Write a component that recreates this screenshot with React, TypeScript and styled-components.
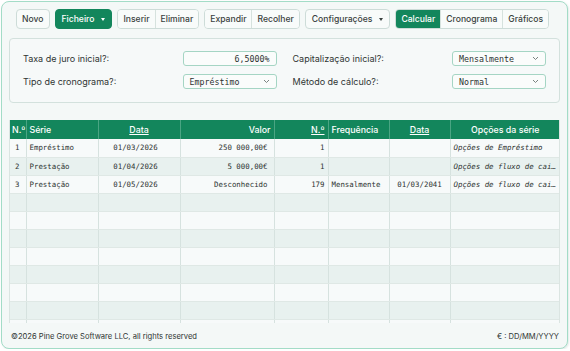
import React from "react";
import styled, { createGlobalStyle, css } from "styled-components";

const GlobalStyle = createGlobalStyle`
  html, body { margin: 0; padding: 0; background: #ffffff; }
  body { font-family: Inter, "Noto Sans", sans-serif; color: #2d3331; }
  * { box-sizing: border-box; }
`;

const GREEN = "#13865c";
const MONO = `"DejaVu Sans Mono", "Liberation Mono", monospace`;

const Card = styled.div`
  margin: 1px 0 0 1px;
  width: 567px;
  height: 348px;
  border: 1.5px solid #a3dcc7;
  border-radius: 8px;
  background: #f4f8f7;
  padding: 7px 7px 0 7px;
  display: flex;
  flex-direction: column;
  box-shadow: 1px 1px 2px rgba(60, 120, 100, 0.15);
`;

const Toolbar = styled.div`
  display: flex;
  gap: 5px;
  padding-left: 7px;
  height: 20px;
  & > * { flex-shrink: 0; }
`;

const btnBase = css<{ $primary?: boolean }>`
  height: 20px;
  padding: 0 5px;
  display: flex;
  align-items: center;
  font-family: Inter, sans-serif;
  font-size: 8.6px;
  font-weight: 500;
  color: ${(p) => (p.$primary ? "#ffffff" : "#3a4240")};
  background: ${(p) => (p.$primary ? GREEN : "#f8fbfa")};
  white-space: nowrap;
`;

const Btn = styled.div<{ $primary?: boolean; $caret?: boolean }>`
  ${btnBase};
  border: 1px solid ${(p) => (p.$primary ? GREEN : "#cddcd8")};
  border-radius: 4px;
  ${(p) =>
    p.$caret &&
    css`
      padding: 0 6px;
      &::after {
        content: "";
        margin-left: 7px;
        border-left: 2.5px solid transparent;
        border-right: 2.5px solid transparent;
        border-top: 3px solid currentColor;
      }
    `}
`;

const Group = styled.div`
  display: flex;
  border: 1px solid #cddcd8;
  border-radius: 4px;
  overflow: hidden;
`;

const GroupBtn = styled.div<{ $primary?: boolean }>`
  ${btnBase};
  height: 18px;
  & + & {
    border-left: 1px solid #d6e2de;
  }
`;

const FormPanel = styled.div`
  margin-top: 9px;
  height: 65px;
  border: 1px solid #d3e1dd;
  border-radius: 4px;
  background: #f6f9f9;
  padding: 12px 13px 0 13px;
  display: grid;
  grid-template-columns: 1fr 1fr;
  column-gap: 16px;
  row-gap: 8px;
  align-content: start;
`;

const Field = styled.div`
  display: flex;
  align-items: center;
  justify-content: space-between;
  height: 15px;
`;

const Label = styled.span`
  font-size: 9px;
  color: #2f3533;
`;

const Control = styled.div<{ $align?: "left" | "right" }>`
  width: 94px;
  height: 15px;
  border: 1px solid #a5d5c4;
  border-radius: 3px;
  background: #fafcfb;
  font-family: ${MONO};
  font-size: 8.3px;
  color: #2d3331;
  display: flex;
  align-items: center;
  justify-content: ${(p) => (p.$align === "right" ? "flex-end" : "space-between")};
  padding: 0 6px 0 6px;
`;

const Chevron = () => (
  <svg width="7" height="5" viewBox="0 0 7 5" fill="none">
    <path d="M1 1l2.5 2.5L6 1" stroke="#6c7573" strokeWidth="0.9" />
  </svg>
);

const TableWrap = styled.div`
  margin-top: 17px;
  height: 203px;
  overflow: hidden;
  border-left: 1px solid #dbe5e2;
  border-right: 1px solid #dbe5e2;
`;

const Table = styled.table`
  width: 551px;
  border-collapse: collapse;
  table-layout: fixed;
  margin-left: -1px;
`;

const Th = styled.th<{ $align?: string; $u?: boolean }>`
  height: 19px;
  background: ${GREEN};
  color: #ffffff;
  font-size: 8.8px;
  font-weight: 500;
  padding: 0 3px;
  text-align: ${(p) => p.$align || "left"};
  text-decoration: ${(p) => (p.$u ? "underline" : "none")};
  border-left: 1px solid #4aa583;
  white-space: nowrap;
  &:first-child { border-left: none; }
`;

const Tr = styled.tr<{ $odd?: boolean }>`
  background: ${(p) => (p.$odd ? "#e8f1ef" : "#f7fafa")};
`;

const Td = styled.td<{ $align?: string; $italic?: boolean; $pl?: number; $pr?: number }>`
  height: 18px;
  font-family: ${MONO};
  font-size: 7.4px;
  color: #2d3331;
  padding: 0 ${(p) => p.$pr ?? 3}px 0 ${(p) => p.$pl ?? 3}px;
  text-align: ${(p) => p.$align || "left"};
  font-style: ${(p) => (p.$italic ? "italic" : "normal")};
  border-left: 1px solid #d6e2df;
  border-bottom: 1px solid #dfe8e5;
  white-space: nowrap;
  overflow: hidden;
  text-overflow: ellipsis;
  &:first-child { border-left: none; }
`;

const Footer = styled.div`
  flex: 1;
  display: flex;
  align-items: center;
  justify-content: space-between;
  padding: 1px 1px 0 2px;
  font-size: 7.6px;
  color: #2f3533;
`;

const cols = [17, 72, 82, 94, 54, 61, 61, 110];

type Row = {
  n: string; serie: string; data: string; valor: string; nn: string; freq: string; data2: string; op: string;
};

const rows: Row[] = [
  { n: "1", serie: "Empréstimo", data: "01/03/2026", valor: "250 000,00€", nn: "1", freq: "", data2: "", op: "Opções de Empréstimo" },
  { n: "2", serie: "Prestação", data: "01/04/2026", valor: "5 000,00€", nn: "1", freq: "", data2: "", op: "Opções de fluxo de caixa" },
  { n: "3", serie: "Prestação", data: "01/05/2026", valor: "Desconhecido", nn: "179", freq: "Mensalmente", data2: "01/03/2041", op: "Opções de fluxo de caixa" },
];

export default function App() {
  const empty = Array.from({ length: 8 });
  return (
    <>
      <GlobalStyle />
      <Card>
        <Toolbar>
          <Btn>Novo</Btn>
          <Btn $primary $caret>Ficheiro</Btn>
          <Group>
            <GroupBtn>Inserir</GroupBtn>
            <GroupBtn>Eliminar</GroupBtn>
          </Group>
          <Group>
            <GroupBtn>Expandir</GroupBtn>
            <GroupBtn>Recolher</GroupBtn>
          </Group>
          <Btn $caret>Configurações</Btn>
          <Group>
            <GroupBtn $primary>Calcular</GroupBtn>
            <GroupBtn>Cronograma</GroupBtn>
            <GroupBtn>Gráficos</GroupBtn>
          </Group>
        </Toolbar>

        <FormPanel>
          <Field>
            <Label>Taxa de juro inicial?:</Label>
            <Control $align="right">6,5000%</Control>
          </Field>
          <Field>
            <Label>Capitalização inicial?:</Label>
            <Control>Mensalmente<Chevron /></Control>
          </Field>
          <Field>
            <Label>Tipo de cronograma?:</Label>
            <Control>Empréstimo<Chevron /></Control>
          </Field>
          <Field>
            <Label>Método de cálculo?:</Label>
            <Control>Normal<Chevron /></Control>
          </Field>
        </FormPanel>

        <TableWrap>
          <Table>
            <colgroup>
              {cols.map((w, i) => (
                <col key={i} style={{ width: w }} />
              ))}
            </colgroup>
            <thead>
              <tr>
                <Th>N.º</Th>
                <Th>Série</Th>
                <Th $align="center" $u>Data</Th>
                <Th $align="right">Valor</Th>
                <Th $align="right" $u>N.º</Th>
                <Th>Frequência</Th>
                <Th $align="center" $u>Data</Th>
                <Th $align="center">Opções da série</Th>
              </tr>
            </thead>
            <tbody>
              {rows.map((r, i) => (
                <Tr key={i} $odd={i % 2 === 1}>
                  <Td $align="center">{r.n}</Td>
                  <Td>{r.serie}</Td>
                  <Td $align="center" $pr={10}>{r.data}</Td>
                  <Td $align="right" $pr={6}>{r.valor}</Td>
                  <Td $align="right">{r.nn}</Td>
                  <Td>{r.freq}</Td>
                  <Td $align="center">{r.data2}</Td>
                  <Td $italic $pr={1}>{r.op}</Td>
                </Tr>
              ))}
              {empty.map((_, i) => (
                <Tr key={`e${i}`} $odd={(i + 3) % 2 === 1}>
                  {cols.map((_, j) => (
                    <Td key={j} />
                  ))}
                </Tr>
              ))}
            </tbody>
          </Table>
        </TableWrap>

        <Footer>
          <span>©2026 Pine Grove Software LLC, all rights reserved</span>
          <span>€ : DD/MM/YYYY</span>
        </Footer>
      </Card>
    </>
  );
}
